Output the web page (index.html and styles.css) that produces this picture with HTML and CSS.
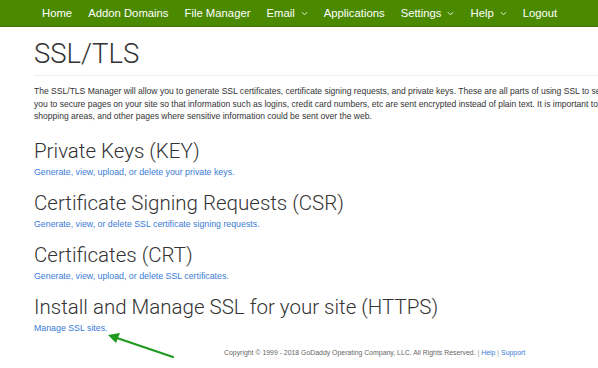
FILE: index.html
```html
<!DOCTYPE html>
<html>
<head>
<meta charset="utf-8">
<link rel="stylesheet" href="styles.css">
</head>
<body>
<nav class="topnav">
  <a class="nav-item">Home</a>
  <a class="nav-item">Addon Domains</a>
  <a class="nav-item">File Manager</a>
  <a class="nav-item">Email <svg class="chev" viewBox="0 0 8 5"><path d="M1 1l3 3 3-3" fill="none" stroke="#fff" stroke-width="1"/></svg></a>
  <a class="nav-item">Applications</a>
  <a class="nav-item">Settings <svg class="chev" viewBox="0 0 8 5"><path d="M1 1l3 3 3-3" fill="none" stroke="#fff" stroke-width="1"/></svg></a>
  <a class="nav-item">Help <svg class="chev" viewBox="0 0 8 5"><path d="M1 1l3 3 3-3" fill="none" stroke="#fff" stroke-width="1"/></svg></a>
  <a class="nav-item">Logout</a>
</nav>
<main class="content">
  <h1 class="page-title">SSL/TLS</h1>
  <p class="intro">The SSL/TLS Manager will allow you to generate SSL certificates, certificate signing requests, and private keys. These are all parts of using SSL to secure your website. SSL allows<br>you to secure pages on your site so that information such as logins, credit card numbers, etc are sent encrypted instead of plain text. It is important to secure your site's login areas,<br>shopping areas, and other pages where sensitive information could be sent over the web.</p>
  <section class="block">
    <h2 class="block-title">Private Keys (KEY)</h2>
    <a class="block-link">Generate, view, upload, or delete your private keys.</a>
  </section>
  <section class="block">
    <h2 class="block-title">Certificate Signing Requests (CSR)</h2>
    <a class="block-link">Generate, view, or delete SSL certificate signing requests.</a>
  </section>
  <section class="block">
    <h2 class="block-title">Certificates (CRT)</h2>
    <a class="block-link">Generate, view, upload, or delete SSL certificates.</a>
  </section>
  <section class="block">
    <h2 class="block-title">Install and Manage SSL for your site (HTTPS)</h2>
    <a class="block-link">Manage SSL sites.</a>
  </section>
  <footer class="footer">Copyright © 1999 - 2018 GoDaddy Operating Company, LLC. All Rights Reserved. <span class="sep">|</span> <a class="foot-link">Help</a> <span class="sep">|</span> <a class="foot-link">Support</a></footer>
</main>
<svg class="arrow" width="80" height="40" viewBox="0 0 80 40">
  <line x1="73" y1="31" x2="14" y2="11" stroke="#1e9a1e" stroke-width="2.2" stroke-linecap="round"/>
  <path d="M8 9 L20 7 L16 17 Z" fill="#1e9a1e"/>
</svg>
</body>
</html>
```
FILE: styles.css
```css
html, body {
  margin: 0;
  padding: 0;
  background: #fff;
  overflow: hidden;
  width: 598px;
  height: 368px;
  position: relative;
}
body {
  font-family: "Liberation Sans", Arial, sans-serif;
}
.topnav {
  height: 26px;
  background: #4b8a00;
  display: flex;
  align-items: center;
  padding-left: 42px;
  gap: 16px;
  border-bottom: 1px solid #3f7600;
}
.nav-item {
  color: #fff;
  font-size: 11.3px;
  white-space: nowrap;
  display: flex;
  align-items: center;
  gap: 3px;
}
.chev {
  width: 7px;
  height: 5px;
  margin-left: 3px;
}
.content {
  padding-left: 34px;
}
.page-title {
  font-family: Roboto, "Liberation Sans", sans-serif;
  font-weight: 300;
  font-size: 27.5px;
  color: #333;
  margin: 0;
  padding: 12px 0 6px;
  line-height: 30px;
  border-bottom: 1px solid #eee;
}
.intro {
  font-size: 8.55px;
  color: #333;
  line-height: 12.5px;
  white-space: nowrap;
  margin: 9px 0 16px;
}
.block {
  display: flex;
  flex-direction: column;
  align-items: flex-start;
}
.block-title {
  font-family: Roboto, "Liberation Sans", sans-serif;
  font-weight: 300;
  font-size: 20.5px;
  color: #333;
  margin: 0;
  line-height: 24px;
}
.block-link {
  color: #3a7bd5;
  font-size: 8.8px;
  line-height: 12px;
  margin: 3px 0 13px;
}
.footer {
  font-size: 6.9px;
  color: #666;
  text-align: center;
  margin-top: 2px;
  padding-left: 190px;
  width: 300px;
  white-space: nowrap;
}
.foot-link { color: #3a7bd5; }
.sep { color: #999; }
.arrow {
  position: absolute;
  left: 100px;
  top: 326px;
}
```
